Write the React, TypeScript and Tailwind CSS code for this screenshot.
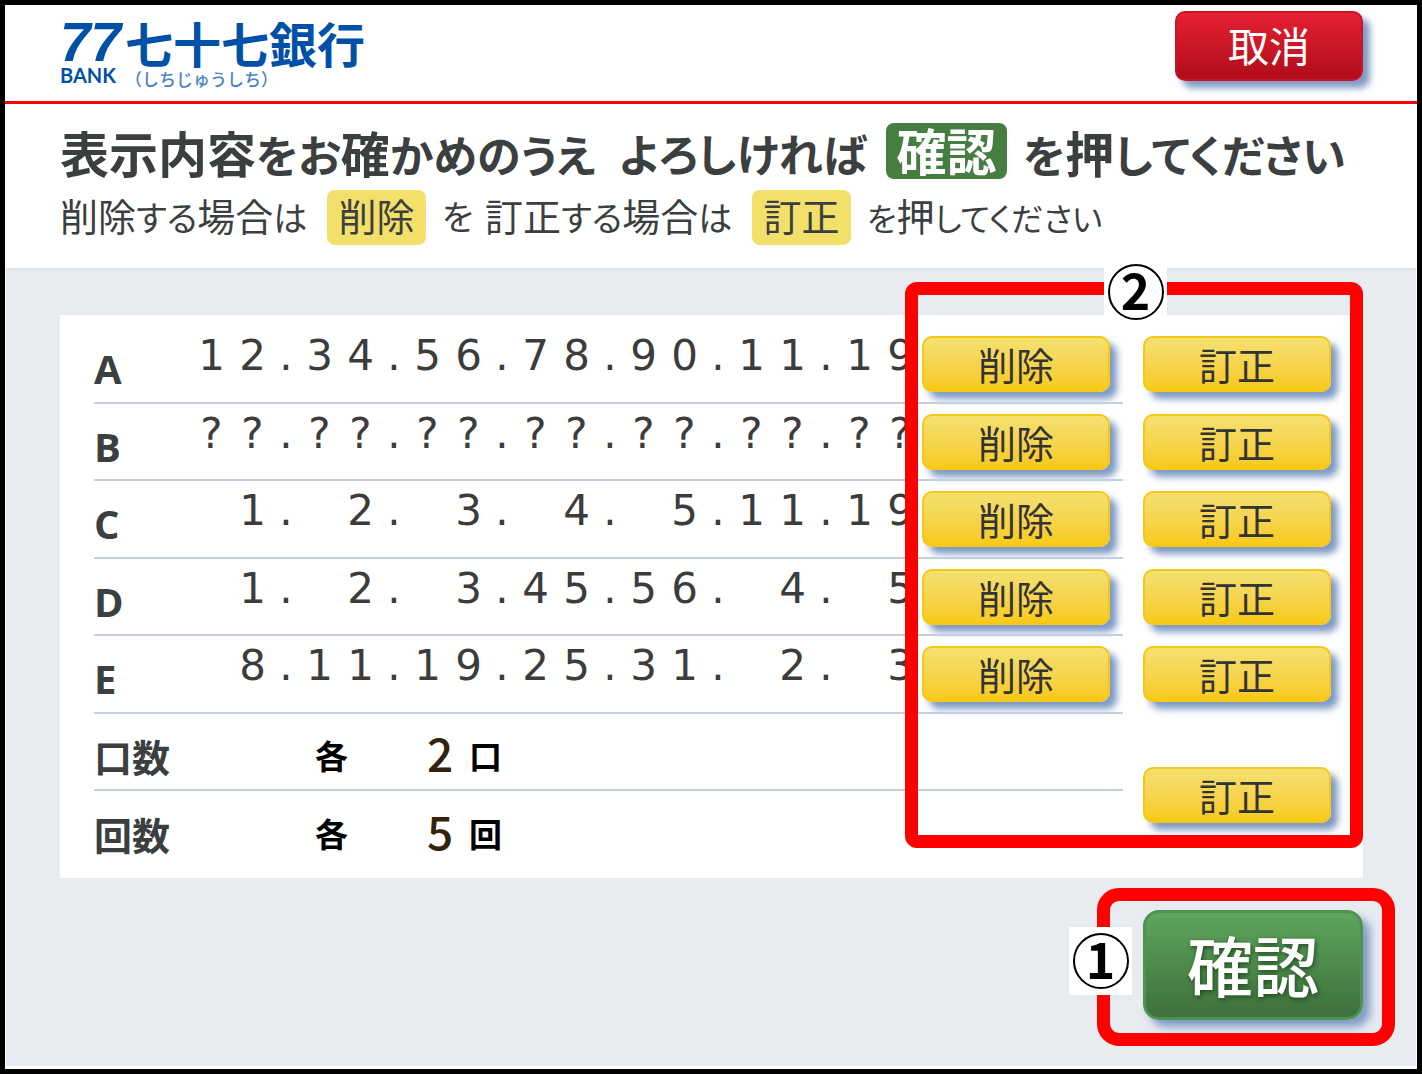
const JP = "font-['Noto_Sans_CJK_JP',sans-serif]";

const RULE = "border-b-2 border-[#c3cfe2]";
const NO_RULE = "border-b-2 border-transparent";

const rows = [
  { label: "A", value: "12.34.56.78.90.11.19" },
  { label: "B", value: "??.??.??.??.??.??.??" },
  { label: "C", value: " 1. 2. 3. 4. 5.11.19" },
  { label: "D", value: " 1. 2. 3.45.56. 4. 5" },
  { label: "E", value: " 8.11.19.25.31. 2. 3" },
];

const counts = [
  { label: "口数", amount: "2", unit: "口" },
  { label: "回数", amount: "5", unit: "回" },
];

function Numbers({ value }: { value: string }) {
  return (
    <div className="flex overflow-x-clip pb-4 pl-px font-['DejaVu_Sans',sans-serif] text-[42px] leading-[52px] text-[#3c3c3c]">
      {value.split("").map((ch, i) => (
        <span
          key={i}
          className={ch === "." ? "w-[26px] shrink-0 text-center" : "w-[41px] shrink-0 text-center"}
        >
          {ch === " " ? "\u00a0" : ch}
        </span>
      ))}
    </div>
  );
}

function YellowButton({ children, label }: { children: string; label: string }) {
  return (
    <button
      type="button"
      aria-label={label}
      className="flex h-14 w-[188px] items-center justify-center rounded-[10px] border-2 border-[#f5c816] bg-linear-to-b from-[#f4e070] to-[#f8ca10] text-[38px] leading-none text-[#333] shadow-[7px_7px_7px_#7f9ac4]"
    >
      {children}
    </button>
  );
}

function Badge({ children, className }: { children: string; className: string }) {
  return (
    <div className={`absolute flex h-[68px] w-[63px] items-center justify-center bg-white ${className}`}>
      <span className="flex size-14 items-center justify-center rounded-full border-2 border-black pb-2 font-['Noto_Sans_CJK_JP',sans-serif] text-[50px] leading-none font-bold text-black">
        {children}
      </span>
    </div>
  );
}

export default function App() {
  return (
    <div className={`flex min-h-screen flex-col border-[5px] border-black bg-white text-[#3c3f40] ${JP}`}>
      <header className="flex h-24 items-start justify-between pr-[54px] pl-[55px]">
        <div className="flex pt-3 text-[#0050a8]">
          <div className="flex w-[65px] flex-col">
            <span className="font-['Liberation_Sans',sans-serif] text-[55px] leading-[50px] font-bold italic">77</span>
            <span className="font-['Lato',sans-serif] text-[20px] leading-4 font-bold">BANK</span>
          </div>
          <div className="flex flex-col">
            <span className="text-[48px] leading-[50px] font-bold">七十七銀行</span>
            <span className="text-[17px] leading-6 font-medium text-[#4b82c0]">（しちじゅうしち）</span>
          </div>
        </div>
        <button
          type="button"
          className="mt-1.5 flex h-[70px] w-[188px] items-center justify-center rounded-[10px] border-2 border-[#c8152a] bg-linear-to-b from-[#e62032] to-[#b00c1a] pb-1 text-[41px] leading-none text-white shadow-[7px_7px_7px_#7f9ac4]"
        >
          取消
        </button>
      </header>

      <section className="border-t-[3px] border-[#ff0000] pb-[23px] pl-[55px]">
        <h1 className="mt-[18px] flex h-[58px] items-center text-[44px] leading-none font-bold whitespace-nowrap [font-feature-settings:'palt']">
          <span className="w-[559px]">
            <span className="text-[49px]">表示内容</span>をお<span className="text-[49px]">確</span>かめのうえ
          </span>
          <span className="w-[267px] pt-1">よろしければ</span>
          <span className="mr-4 flex h-14 w-[121px] items-center justify-center rounded-lg bg-[#467e42] pb-1 text-[50px] text-white">確認</span>
          <span>
            を<span className="text-[49px]">押</span>してください
          </span>
        </h1>
        <p className="mt-2.5 flex h-[55px] items-center text-[34px] leading-none font-normal whitespace-nowrap [font-feature-settings:'palt']">
          <span className="w-[267px] pb-1.5">
            <span className="text-[38px]">削除</span>する<span className="text-[38px]">場合</span>は
          </span>
          <span className="mr-4 flex h-[55px] w-[99px] items-center justify-center rounded-lg bg-[#f3e06a] pb-1.5 text-[38px]">削除</span>
          <span className="w-[43px] pb-1">を</span>
          <span className="w-[267px] pb-1.5">
            <span className="text-[38px]">訂正</span>する<span className="text-[38px]">場合</span>は
          </span>
          <span className="mr-4 flex h-[55px] w-[99px] items-center justify-center rounded-lg bg-[#f3e06a] pb-1.5 text-[38px]">訂正</span>
          <span className="pb-1.5 text-[32px]">
            を<span className="text-[38px]">押</span>してください
          </span>
        </p>
      </section>

      <main className="mx-px mb-[3px] flex-1 border-t-2 border-[#dde3ec] bg-[#e8ebf0] pt-[45px] pr-[53px] pl-[54px]">
        <div className="relative bg-white py-2.5 pr-8 pl-[34px]">
          <table className="w-full table-fixed border-collapse">
            <colgroup>
              <col className="w-24" />
              <col />
              <col className="w-[213px]" />
              <col className="w-[208px]" />
            </colgroup>
            <tbody>
              {rows.map((row) => (
                <tr key={row.label} className="odd:h-[78px] even:h-[77px]">
                  <th scope="row" className={`pt-2.5 text-left font-['Open_Sans',sans-serif] text-[40px] leading-none font-bold ${RULE}`}>
                    {row.label}
                  </th>
                  <td className={`p-0 ${RULE}`}>
                    <Numbers value={row.value} />
                  </td>
                  <td className={`pl-3 ${RULE}`}>
                    <YellowButton label={`${row.label} 削除`}>削除</YellowButton>
                  </td>
                  <td className={`pl-5 ${NO_RULE}`}>
                    <YellowButton label={`${row.label} 訂正`}>訂正</YellowButton>
                  </td>
                </tr>
              ))}
              {counts.map((row, i) => (
                <tr key={row.label} className="odd:h-[78px] even:h-[77px]">
                  <th
                    scope="row"
                    className={`pt-2 text-left text-[38px] leading-none font-bold whitespace-nowrap ${i === 0 ? RULE : ""}`}
                  >
                    {row.label}
                  </th>
                  <td colSpan={2} className={`pt-2 ${i === 0 ? RULE : ""}`}>
                    <div className="flex items-center pl-[125px] text-[33px] leading-none font-bold text-black">
                      <span className="w-[112px]">各</span>
                      <span className="w-[42px] pb-2 text-[46px] font-medium text-[#33220c]">{row.amount}</span>
                      <span>{row.unit}</span>
                    </div>
                  </td>
                  {i === 0 && (
                    <td rowSpan={2} className="pt-2 pl-5">
                      <YellowButton label="口数・回数 訂正">訂正</YellowButton>
                    </td>
                  )}
                </tr>
              ))}
            </tbody>
          </table>
          <div className="pointer-events-none absolute -top-[33px] right-0 bottom-[30px] w-[458px] rounded-xl border-[13px] border-[#ff0000]">
            <Badge className="-top-[37px] left-[186px]">2</Badge>
          </div>
        </div>

        <div className="mt-8 flex justify-end">
          <div className="relative">
            <button
              type="button"
              className="flex h-[110px] w-[220px] items-center justify-center rounded-2xl border-[3px] border-[#4c9450] bg-linear-to-b from-[#5da65c] to-[#3e703c] pb-1 text-[66px] leading-none font-medium text-white shadow-[7px_7px_8px_#7f9ac4] text-shadow-[1px_2px_5px_#1f4a1f]"
            >
              確認
            </button>
            <div className="pointer-events-none absolute -top-[22px] -right-8 -bottom-[26px] -left-[46px] rounded-[22px] border-[13px] border-[#ff0000]">
              <Badge className="top-[26px] -left-[41px]">1</Badge>
            </div>
          </div>
        </div>
      </main>
    </div>
  );
}
